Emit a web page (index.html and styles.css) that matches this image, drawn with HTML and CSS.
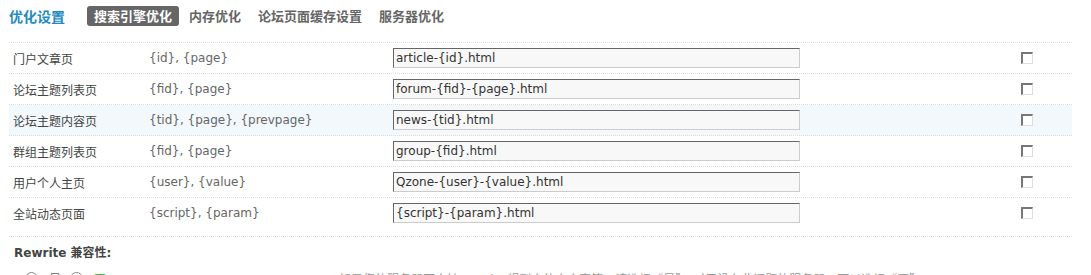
FILE: index.html
```html
<!DOCTYPE html>
<html lang="zh-CN">
<head>
<meta charset="UTF-8">
<title>优化设置</title>
<link rel="stylesheet" href="styles.css">
</head>
<body>

<div class="page">
  <div class="itemtitle">
    <h3>优化设置</h3>
    <ul class="tab1">
      <li class="current"><span>搜索引擎优化</span></li>
      <li><span>内存优化</span></li>
      <li><span>论坛页面缓存设置</span></li>
      <li><span>服务器优化</span></li>
    </ul>
  </div>

  <div class="tb">
    <div class="row">
      <span class="label">门户文章页</span>
      <span class="vars">{id}, {page}</span>
      <input class="txt" type="text" value="article-{id}.html">
      <span></span>
      <span class="chk"></span>
    </div>
    <div class="row">
      <span class="label">论坛主题列表页</span>
      <span class="vars">{fid}, {page}</span>
      <input class="txt" type="text" value="forum-{fid}-{page}.html">
      <span></span>
      <span class="chk"></span>
    </div>
    <div class="row hover">
      <span class="label">论坛主题内容页</span>
      <span class="vars">{tid}, {page}, {prevpage}</span>
      <input class="txt" type="text" value="news-{tid}.html">
      <span></span>
      <span class="chk"></span>
    </div>
    <div class="row">
      <span class="label">群组主题列表页</span>
      <span class="vars">{fid}, {page}</span>
      <input class="txt" type="text" value="group-{fid}.html">
      <span></span>
      <span class="chk"></span>
    </div>
    <div class="row">
      <span class="label">用户个人主页</span>
      <span class="vars">{user}, {value}</span>
      <input class="txt" type="text" value="Qzone-{user}-{value}.html">
      <span></span>
      <span class="chk"></span>
    </div>
    <div class="row last">
      <span class="label">全站动态页面</span>
      <span class="vars">{script}, {param}</span>
      <input class="txt" type="text" value="{script}-{param}.html">
      <span></span>
      <span class="chk"></span>
    </div>
  </div>

  <div class="setting">
    <div class="setting-title">Rewrite 兼容性:</div>
    <div class="setting-row">
      <ul class="radios">
        <li><span class="radio"></span>是</li>
        <li class="checked"><span class="radio on"></span>否</li>
      </ul>
      <span class="tips">如果您的服务器不支持 Rewrite 规则中的中文字符，请选择“是”。对于没有此问题的服务器，可以选择“否”</span>
    </div>
  </div>
</div>

</body>
</html>
```

FILE: styles.css
```css
body {
  margin: 0;
  font-family: "DejaVu Sans", "Noto Sans CJK SC", sans-serif;
  font-size: 12px;
  color: #333;
  background: #fff;
}

.page {
  padding-left: 9px;
  width: 1063px;
}

/* title + tabs */
.itemtitle {
  display: flex;
  align-items: center;
  height: 32px;
  padding-bottom: 10px;
}

.itemtitle h3 {
  margin: 0 22px 0 0;
  font-family: "Noto Sans CJK SC", sans-serif;
  font-size: 14px;
  font-weight: bold;
  color: #1f8bc0;
}

.tab1 {
  display: flex;
  margin: 0;
  padding: 0;
  list-style: none;
}

.tab1 li {
  margin-right: 3px;
  padding: 0 7px;
  height: 20px;
  line-height: 20px;
  border-radius: 3px;
  font-family: "Noto Sans CJK SC", sans-serif;
  font-size: 13px;
  font-weight: bold;
  color: #666;
}

.tab1 li.current {
  background: #666;
  color: #fff;
}

/* table */
.tb {
  border-top: 1px dotted #ddd;
}

.row {
  display: grid;
  grid-template-columns: 136px 244px 407px 1fr 12px 39px;
  align-items: center;
  height: 30px;
  padding-left: 4px;
  border-bottom: 1px dotted #ddd;
}

.row.hover {
  background: #f2f8fc;
}

.row.last {
  padding-bottom: 8px;
}

.label {
  color: #444;
}

.vars {
  color: #666;
}

.txt {
  box-sizing: border-box;
  width: 407px;
  height: 20px;
  margin: 0;
  padding: 0 2px;
  border: 1px solid #ccc;
  border-top-color: #666;
  border-left-color: #666;
  background: #f8f8f8;
  font-family: "DejaVu Sans", sans-serif;
  font-size: 12px;
  color: #333;
}

.chk {
  box-sizing: border-box;
  width: 12px;
  height: 12px;
  border: 1px solid #ddd;
  border-top: 2px solid #777;
  border-left: 2px solid #777;
  background: #fff;
}

/* rewrite setting */
.setting-title {
  padding: 6px 0 0 5px;
  height: 17px;
  font-weight: bold;
  color: #444;
}

.setting-row {
  display: flex;
  align-items: center;
  padding-top: 10px;
}

.radios {
  display: flex;
  margin: 0;
  padding: 0 0 0 16px;
  width: 314px;
  list-style: none;
  font-family: "Noto Sans CJK SC", sans-serif;
}

.radios li {
  display: flex;
  align-items: center;
  margin-right: 9px;
  color: #666;
}

.radios li.checked {
  color: #3a3;
}

.radio {
  box-sizing: border-box;
  width: 13px;
  height: 13px;
  margin-right: 11px;
  border: 1px solid #888;
  border-radius: 50%;
  background: #fff;
}

.tips {
  font-family: "Noto Sans CJK SC", sans-serif;
  color: #999;
}
```
